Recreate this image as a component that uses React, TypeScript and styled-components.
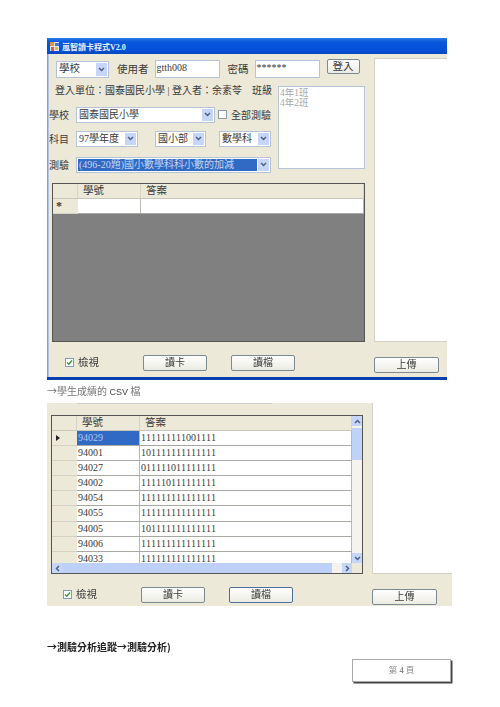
import React from 'react';
import styled, { createGlobalStyle } from 'styled-components';

const GlobalStyle = createGlobalStyle`
  html, body {
    margin: 0;
    padding: 0;
    background: #fff;
  }
  body {
    font-family: "Liberation Serif", "Noto Sans CJK TC", serif;
    font-size: 10px;
    color: #3a3a3a;
  }
`;

const ChevronDown = () => (
  <svg width="7" height="5" viewBox="0 0 7 5">
    <path d="M1 1l2.5 2.5L6 1" fill="none" stroke="#4d6185" strokeWidth="1.5" />
  </svg>
);

const ChevronUp = () => (
  <svg width="7" height="5" viewBox="0 0 7 5">
    <path d="M1 4l2.5-2.5L6 4" fill="none" stroke="#4d6185" strokeWidth="1.5" />
  </svg>
);

const ChevronLeft = () => (
  <svg width="5" height="7" viewBox="0 0 5 7">
    <path d="M4 1L1.5 3.5 4 6" fill="none" stroke="#4d6185" strokeWidth="1.5" />
  </svg>
);

const ChevronRight = () => (
  <svg width="5" height="7" viewBox="0 0 5 7">
    <path d="M1 1l2.5 2.5L1 6" fill="none" stroke="#4d6185" strokeWidth="1.5" />
  </svg>
);

const AppIcon = () => (
  <svg width="9" height="9" viewBox="0 0 9 9">
    <rect width="9" height="9" fill="#dfe6f2" />
    <rect x="0" y="0" width="4" height="4" fill="#e8903a" />
    <rect x="5" y="1" width="4" height="3" fill="#4a78c8" />
    <rect x="1" y="5" width="3" height="4" fill="#d8623a" />
    <rect x="5" y="5" width="3" height="3" fill="#e8b84a" />
  </svg>
);

const CheckMark = () => (
  <svg width="7" height="7" viewBox="0 0 7 7">
    <path d="M1 3.5l1.8 1.8L6 1.5" fill="none" stroke="#2f9a35" strokeWidth="1.4" />
  </svg>
);

const Combo: React.FC<{ width: number; selected?: boolean; children: React.ReactNode }> = ({
  width,
  selected,
  children,
}) => (
  <ComboBox $width={width}>
    <ComboText $selected={selected}>{children}</ComboText>
    <ComboArrow>
      <ChevronDown />
    </ComboArrow>
  </ComboBox>
);

interface ColumnWidths {
  head: number;
  first: number;
}

const EmptyGrid = () => (
  <Grid $top={11} $width={313}>
    <HeaderRow>
      <HeadCell $width={25} />
      <HeadCell $width={63}>學號</HeadCell>
      <HeadCell $grow>答案</HeadCell>
    </HeaderRow>
    <DataRow>
      <RowHead $width={25}>*</RowHead>
      <Cell $width={63} />
      <Cell $grow />
    </DataRow>
  </Grid>
);

const records = [
  ['94029', '111111111001111'],
  ['94001', '101111111111111'],
  ['94027', '011111011111111'],
  ['94002', '111110111111111'],
  ['94054', '111111111111111'],
  ['94055', '111111111111111'],
  ['94005', '101111111111111'],
  ['94006', '111111111111111'],
  ['94033', '111111111111111'],
];

const cols: ColumnWidths = { head: 25, first: 63 };

const FilledGrid = () => (
  <Grid $top={11} $width={312}>
    <GridTop>
      <GridTable>
        <HeaderRow>
          <HeadCell $width={cols.head} />
          <HeadCell $width={cols.first}>學號</HeadCell>
          <HeadCell $grow>答案</HeadCell>
        </HeaderRow>
        {records.map(([id, answer], i) => (
          <DataRow key={id}>
            <RowHead $width={cols.head}>{i === 0 && <Pointer />}</RowHead>
            <Cell $width={cols.first} $selected={i === 0}>
              {id}
            </Cell>
            <Cell $grow>{answer}</Cell>
          </DataRow>
        ))}
      </GridTable>
      <VScroll>
        <ScrollButton>
          <ChevronUp />
        </ScrollButton>
        <VThumb />
        <VTrack />
        <ScrollButton>
          <ChevronDown />
        </ScrollButton>
      </VScroll>
    </GridTop>
    <HScroll>
      <ScrollButton>
        <ChevronLeft />
      </ScrollButton>
      <HThumb />
      <HTrack />
      <ScrollButton>
        <ChevronRight />
      </ScrollButton>
      <ScrollCorner />
    </HScroll>
  </Grid>
);

const Actions: React.FC<{ height: number; pad: number; focused?: boolean }> = ({ height, pad, focused }) => (
  <ActionBar $height={height} $pad={pad}>
    <CheckBox>
      <CheckMark />
    </CheckBox>
    <CheckLabel>檢視</CheckLabel>
    <ActionButton $left={45}>讀卡</ActionButton>
    <ActionButton $left={24} $focused={focused}>
      讀檔
    </ActionButton>
    <UploadButton>上傳</UploadButton>
  </ActionBar>
);

const App = () => (
  <Page>
    <GlobalStyle />
    <MainWindow>
      <TitleBar>
        <AppIcon />
        <TitleText>嵐智讀卡程式V2.0</TitleText>
      </TitleBar>
      <WindowBody>
        <LeftPane>
          <LoginRow>
            <Combo width={53}>學校</Combo>
            <LoginLabel $left={8}>使用者</LoginLabel>
            <TextInput $left={6}>gtth008</TextInput>
            <LoginLabel $left={8}>密碼</LoginLabel>
            <TextInput $left={6}>******</TextInput>
            <LoginButton>登入</LoginButton>
          </LoginRow>
          <FormBody>
            <FormFields>
              <UnitRow>
                <span>登入單位：國泰國民小學 | 登入者：余素苓</span>
                <span>班級</span>
              </UnitRow>
              <FieldRow $top={11}>
                <FieldLabel>學校</FieldLabel>
                <Combo width={139}>國泰國民小學</Combo>
                <PlainBox />
                <span>全部測驗</span>
              </FieldRow>
              <FieldRow $top={9}>
                <FieldLabel>科目</FieldLabel>
                <Combo width={62}>97學年度</Combo>
                <Spacer $width={17} />
                <Combo width={51}>國小部</Combo>
                <Spacer $width={13} />
                <Combo width={52}>數學科</Combo>
              </FieldRow>
              <FieldRow $top={11}>
                <FieldLabel>測驗</FieldLabel>
                <Combo width={195} selected>
                  (496-20題)國小數學科科小數的加減
                </Combo>
              </FieldRow>
            </FormFields>
            <ClassList>
              <div>4年1班</div>
              <div>4年2班</div>
            </ClassList>
          </FormBody>
          <EmptyGrid />
        </LeftPane>
        <RightPane $top={4} />
      </WindowBody>
      <Actions height={35} pad={18} />
      <WindowEdge />
    </MainWindow>
    <Caption>
      <Arrow>→</Arrow>學生成績的 <Latin>CSV</Latin> 檔
    </Caption>
    <SecondWindow>
      <WindowBody>
        <LeftPane $width={325}>
          <ComboRemnant />
          <GridSlot>
            <FilledGrid />
          </GridSlot>
        </LeftPane>
        <RightPane $open />
      </WindowBody>
      <Actions height={32} pad={16} focused />
    </SecondWindow>
    <PathText>→測驗分析追蹤→測驗分析)</PathText>
    <PageBox>
      第 <b>4</b> 頁
    </PageBox>
  </Page>
);

// Styled Components

const Page = styled.div`
  width: 500px;
  height: 707px;
  padding: 38px 0 0 47px;
  box-sizing: border-box;
  overflow: hidden;
  filter: blur(0.35px);
`;

const MainWindow = styled.div`
  width: 400px;
  height: 342px;
  background: #ece9d8;
  display: flex;
  flex-direction: column;
  box-shadow: inset 1.5px 0 0 #7d9fe0;
`;

const SecondWindow = styled.div`
  width: 405px;
  height: 203px;
  background: #ece9d8;
  display: flex;
  flex-direction: column;
`;

const TitleBar = styled.div`
  height: 16px;
  flex: none;
  display: flex;
  align-items: center;
  gap: 3px;
  padding-left: 3px;
  background: linear-gradient(180deg, #2a7be8 0%, #0757dc 25%, #0450d8 80%, #0a46b8 100%);
`;

const TitleText = styled.span`
  color: #e8f0ff;
  font-size: 8px;
  font-weight: bold;
`;

const WindowBody = styled.div`
  display: flex;
  flex: 1;
  min-height: 0;
`;

const LeftPane = styled.div<{ $width?: number }>`
  width: ${(props) => props.$width ?? 327}px;
  flex: none;
  box-sizing: border-box;
  padding-left: 2px;
`;

const RightPane = styled.div<{ $top?: number; $open?: boolean }>`
  flex: 1;
  margin-top: ${(props) => props.$top ?? 0}px;
  background: #fff;
  border-left: 1px solid #d4d2c6;
  border-top: ${(props) => (props.$open ? 'none' : '1px solid #d4d2c6')};
  border-bottom: 1px solid #d4d2c6;
`;

const ComboBox = styled.div<{ $width: number }>`
  width: ${(props) => props.$width}px;
  height: 16px;
  box-sizing: border-box;
  flex: none;
  display: flex;
  align-items: stretch;
  background: #fff;
  border: 1px solid #b5c4d8;
  padding: 1px;
`;

const ComboText = styled.div<{ $selected?: boolean }>`
  flex: 1;
  min-width: 0;
  padding-left: 1px;
  line-height: 12px;
  white-space: nowrap;
  overflow: hidden;
  color: ${(props) => (props.$selected ? '#c6d4f0' : '#3a3a3a')};
  background: ${(props) => (props.$selected ? '#316ac5' : 'transparent')};
`;

const ComboArrow = styled.div`
  width: 11px;
  flex: none;
  margin-left: 1px;
  display: flex;
  align-items: center;
  justify-content: center;
  background: #c6d6f8;
`;

const LoginRow = styled.div`
  display: flex;
  align-items: flex-start;
  margin: 6px 0 0 7px;
  height: 25px;
  font-size: 10.5px;

  & > ${ComboBox} {
    margin-top: 1px;
    height: 17px;
  }
`;

const LoginLabel = styled.span<{ $left: number }>`
  margin: 3px 0 0 ${(props) => props.$left}px;
  line-height: 14px;
  white-space: nowrap;
`;

const TextInput = styled.div<{ $left: number }>`
  width: 65px;
  height: 18px;
  box-sizing: border-box;
  flex: none;
  margin-left: ${(props) => props.$left}px;
  background: #fff;
  border: 1px solid #b5c4d8;
  padding-left: 1px;
  font-size: 10px;
  line-height: 13px;
`;

const LoginButton = styled.div`
  width: 33px;
  height: 15px;
  box-sizing: border-box;
  flex: none;
  margin: -1px 0 0 7px;
  border: 1px solid #7c8a94;
  border-radius: 2px;
  background: linear-gradient(180deg, #fff, #ecebe2);
  text-align: center;
  line-height: 13px;
`;

const FormBody = styled.div`
  display: flex;
  align-items: flex-start;
`;

const FormFields = styled.div`
  width: 224px;
  flex: none;
  margin-left: -1px;
`;

const UnitRow = styled.div`
  display: flex;
  justify-content: space-between;
  height: 11px;
  line-height: 11px;
  padding-left: 7px;
  white-space: nowrap;
`;

const FieldRow = styled.div<{ $top: number }>`
  display: flex;
  align-items: center;
  margin-top: ${(props) => props.$top}px;
  height: 15px;
  white-space: nowrap;
`;

const FieldLabel = styled.span`
  width: 28px;
  flex: none;
  padding-left: 1px;
  box-sizing: border-box;
`;

const Spacer = styled.div<{ $width: number }>`
  width: ${(props) => props.$width}px;
  flex: none;
`;

const PlainBox = styled.div`
  width: 9px;
  height: 9px;
  box-sizing: border-box;
  flex: none;
  margin: 0 4px 0 3px;
  background: #fff;
  border: 1px solid #8e9aa8;
`;

const ClassList = styled.div`
  width: 87px;
  height: 83px;
  box-sizing: border-box;
  flex: none;
  margin: 1px 0 0 6px;
  padding: 1px 0 0 1px;
  background: #fff;
  border: 1px solid #b5c4d8;
  color: #a8a8a8;
  font-size: 9.5px;
  line-height: 10px;
`;

const Grid = styled.div<{ $top: number; $width: number }>`
  width: ${(props) => props.$width}px;
  height: 159px;
  box-sizing: border-box;
  margin: ${(props) => props.$top}px 0 0 3px;
  background: #808080;
  border: 1px solid #555;
  overflow: hidden;
`;

const GridSlot = styled.div`
  margin-left: -1px;
`;

const GridTop = styled.div`
  display: flex;
  height: 147px;
`;

const GridTable = styled.div`
  flex: 1;
  min-width: 0;
  overflow: hidden;
  background: #fff;
`;

const HeaderRow = styled.div`
  display: flex;
  height: 15px;
  background: #ece9d8;
  border-bottom: 1px solid #c9c7ba;
  box-sizing: border-box;
`;

const HeadCell = styled.div<{ $width?: number; $grow?: boolean }>`
  width: ${(props) => (props.$width ? `${props.$width}px` : 'auto')};
  flex: ${(props) => (props.$grow ? 1 : 'none')};
  box-sizing: border-box;
  padding-left: 5px;
  line-height: 13px;
  font-size: 10.5px;
  border-right: 1px solid #d6d3c4;
`;

const DataRow = styled.div`
  display: flex;
  height: 15.1px;
  box-sizing: border-box;
  background: #fff;
  border-bottom: 1px solid #a9a9a4;
`;

const RowHead = styled.div<{ $width: number }>`
  width: ${(props) => props.$width}px;
  flex: none;
  box-sizing: border-box;
  display: flex;
  align-items: center;
  padding-left: 3px;
  background: #ece9d8;
  border-bottom: 1px solid #d6d3c4;
  margin-bottom: -1px;
  font-size: 12px;
  font-weight: bold;
  line-height: 12px;
`;

const Cell = styled.div<{ $width?: number; $grow?: boolean; $selected?: boolean }>`
  width: ${(props) => (props.$width ? `${props.$width}px` : 'auto')};
  flex: ${(props) => (props.$grow ? 1 : 'none')};
  box-sizing: border-box;
  padding-left: 1px;
  line-height: 14px;
  font-kerning: none;
  border-right: 1px solid #b9b9b4;
  color: ${(props) => (props.$selected ? '#aec4ec' : '#3a3a3a')};
  background: ${(props) => (props.$selected ? '#316ac5' : 'transparent')};
`;

const Pointer = styled.div`
  width: 0;
  height: 0;
  margin-left: 1px;
  border-left: 4px solid #222;
  border-top: 3px solid transparent;
  border-bottom: 3px solid transparent;
`;

const VScroll = styled.div`
  width: 10px;
  flex: none;
  display: flex;
  flex-direction: column;
  background: #f4f3ee;
`;

const HScroll = styled.div`
  display: flex;
  height: 10px;
  background: #f4f3ee;
`;

const ScrollButton = styled.div`
  width: 10px;
  height: 10px;
  flex: none;
  display: flex;
  align-items: center;
  justify-content: center;
  background: #c6d6f8;
`;

const VThumb = styled.div`
  height: 32px;
  flex: none;
  margin-top: 2px;
  background: #c1d2f8;
`;

const VTrack = styled.div`
  flex: 1;
`;

const HThumb = styled.div`
  width: 270px;
  flex: none;
  background: #bcd0f8;
`;

const HTrack = styled.div`
  flex: 1;
`;

const ScrollCorner = styled.div`
  width: 10px;
  flex: none;
  background: #ece9d8;
`;

const ActionBar = styled.div<{ $height: number; $pad: number }>`
  height: ${(props) => props.$height}px;
  flex: none;
  box-sizing: border-box;
  display: flex;
  align-items: flex-start;
  padding: 13px 0 0 ${(props) => props.$pad}px;
`;

const CheckBox = styled.div`
  width: 9px;
  height: 9px;
  margin-top: 3px;
  flex: none;
  box-sizing: border-box;
  display: flex;
  align-items: center;
  justify-content: center;
  background: #fff;
  border: 1px solid #7f9db9;
`;

const CheckLabel = styled.span`
  width: 20px;
  margin: 1px 0 0 4px;
  flex: none;
  line-height: 14px;
  font-size: 10.5px;
  white-space: nowrap;
`;

const ActionButton = styled.div<{ $left: number; $focused?: boolean }>`
  width: 64px;
  height: 16px;
  flex: none;
  box-sizing: border-box;
  margin-left: ${(props) => props.$left}px;
  border: ${(props) => (props.$focused ? '1.5px solid #4f6f9c' : '1px solid #7c8a94')};
  border-radius: 2px;
  background: linear-gradient(180deg, #fff, #ecebe2);
  text-align: center;
  line-height: 14px;
`;

const UploadButton = styled(ActionButton).attrs({ $left: 79 })`
  height: 16px;
  width: 65px;
  margin-top: 2px;
`;

const WindowEdge = styled.div`
  height: 3px;
  flex: none;
  background: #0a3fb0;
`;

const Caption = styled.div`
  height: 23px;
  line-height: 22px;
  color: #777;
  font-size: 10px;
`;

const Arrow = styled.span`
  font-family: "Noto Sans CJK TC", sans-serif;
`;

const Latin = styled.span`
  font-family: "Liberation Sans", sans-serif;
  font-size: 9px;
  color: #444;
`;

const ComboRemnant = styled.div`
  width: 195px;
  height: 1px;
  margin-left: 28px;
  background: #d0d0d0;
`;

const PathText = styled.div`
  margin-top: 35px;
  height: 12px;
  line-height: 12px;
  font-family: "Noto Sans CJK TC", sans-serif;
  font-size: 10px;
  font-weight: bold;
  color: #222;
  white-space: nowrap;
`;

const PageBox = styled.div`
  width: 99px;
  height: 23px;
  box-sizing: border-box;
  margin: 6px 0 0 305px;
  border: 1px solid #aaa;
  box-shadow: 1.5px 1.5px 0 #444;
  background: #fff;
  text-align: center;
  line-height: 21px;
  font-size: 8.5px;
  color: #888;
`;

export default App;
